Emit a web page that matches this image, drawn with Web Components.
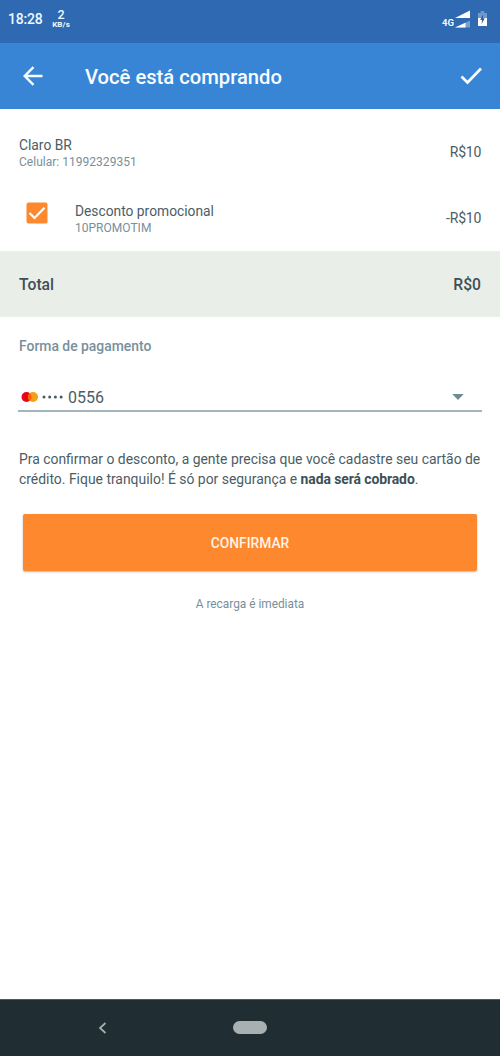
<!DOCTYPE html>
<html lang="pt-BR">
<head>
<meta charset="utf-8">
<title>Você está comprando</title>
<style>
html,body{margin:0;height:100%;background:#fff}
body{font-family:Roboto,"Liberation Sans",sans-serif;color:#4b5d65}
</style>
</head>
<body>
<checkout-screen></checkout-screen>
<script>
function define(name, html) {
  const t = document.createElement('template');
  t.innerHTML = html;
  customElements.define(name, class extends HTMLElement {
    constructor() {
      super();
      this.attachShadow({mode: 'open'}).append(t.content.cloneNode(true));
    }
  });
}

define('status-bar', `
<style>
:host{display:flex;align-items:center;height:43px;box-sizing:border-box;padding:0 13px 6px 8px;background:#2f69b1;color:#eef9ff;font-weight:500}
.time{font-size:14px;line-height:16px;letter-spacing:-.2px;margin-top:1px}
.rate{display:flex;flex-direction:column;align-items:center;margin-left:9px;font-size:12.5px;line-height:13px;width:19px}
.rate small{font-size:8px;line-height:8px;font-weight:700;letter-spacing:.1px}
.net{margin-left:auto;font-size:9.5px;line-height:10px;font-weight:700;margin-top:9px}
svg{display:block}
.sig{margin:0 7px 0 0}
</style>
<span class="time">18:28</span>
<span class="rate"><span>2</span><small>KB/s</small></span>
<span class="net">4G</span>
<svg class="sig" width="17" height="18" viewBox="0 0 17 18"><path d="M1 8L16 .500V8Z" fill="#fff"/><path d="M1 17.500L16 10.500V17.500Z" fill="#7aa0d0"/><path d="M1 17.500L11.500 12.700V17.500Z" fill="#fff"/></svg>
<svg width="9" height="17" viewBox="0 0 10 17" preserveAspectRatio="none"><path d="M3 1H7V3H10V8H0V3H3Z" fill="#7399cc"/><path d="M0 8H10V16H0Z" fill="#fff"/><path d="M5.800 4L2.500 10H4.600L4 14L7.500 8.300H5.300Z" fill="#2f5995"/></svg>
`);

define('app-bar', `
<style>
:host{display:flex;align-items:center;height:66px;box-sizing:border-box;padding:0 16px 0 21px;background:#3985d5;color:#f8fdff}
svg{display:block;fill:none;stroke:#f5fcff;stroke-width:2.400}
.title{margin:1px auto 0 40px;font-size:20.2px;line-height:24px;font-weight:500}
</style>
<svg width="24" height="24" viewBox="0 0 24 24"><path d="M21.500 12H4M12.500 3.200L3.700 12L12.500 20.800"/></svg>
<span class="title"><slot></slot></span>
<svg width="26" height="24" viewBox="0 0 26 24"><path d="M3.500 12.500L9.500 18.500L23 4.500" stroke-width="2.700"/></svg>
`);

define('line-item', `
<style>
:host{display:flex;align-items:center;height:66px;box-sizing:border-box;padding:0 19px}
.text{flex:1;display:flex;flex-direction:column;margin-top:3px}
.name{font-size:13.8px;line-height:17px}
.sub{font-size:12px;line-height:17px;color:#78909c;letter-spacing:.02px}
.price{font-size:14px;line-height:17px;letter-spacing:-.2px;margin-right:-.2px}
</style>
<slot name="lead"></slot>
<span class="text"><span class="name"><slot></slot></span><span class="sub"><slot name="sub"></slot></span></span>
<span class="price"><slot name="price"></slot></span>
`);

define('check-box', `
<style>
:host{display:block;width:22px;height:22px;margin:-10px 27px 0 7px}
svg{display:block}
</style>
<svg width="22" height="22" viewBox="0 0 22 22"><rect x=".500" y=".500" width="21" height="21" rx="2" fill="#fd882e"/><path d="M3.500 11L8.500 16L18.500 5.800" fill="none" stroke="#fff" stroke-width="2.200"/></svg>
`);

define('total-row', `
<style>
:host{display:flex;align-items:center;justify-content:space-between;height:66px;box-sizing:border-box;padding:2px 19px 0;background:#e9efe8;color:#3d4f57;font-size:15.7px;line-height:20px;font-weight:500}
</style>
<slot></slot><slot name="price"></slot>
`);

define('payment-select', `
<style>
:host{display:block;margin:20px 18px 0}
.label{margin-left:1px;font-size:13.9px;line-height:18px;font-weight:500;color:#78909c}
.field{display:flex;align-items:center;height:27px;margin-top:28px;border-bottom:2px solid #a3b4bc;padding:0 18px 0 3px;font-size:16px;color:#4b5d65}
svg{display:block}
.dots{margin-left:3px}
.num{margin-left:4px;flex:1;padding-top:1px}
</style>
<div class="label"><slot></slot></div>
<div class="field">
<svg width="18" height="12" viewBox="0 0 18 12"><circle cx="5.500" cy="6" r="5" fill="#e8051b"/><circle cx="12" cy="6" r="5" fill="#f79e1b"/><path d="M8.750 2.200A5 5 0 0 1 8.750 9.800A5 5 0 0 1 8.750 2.200" fill="#ff5f00"/></svg>
<svg class="dots" width="22" height="4" viewBox="0 0 22 4" fill="#455a64"><circle cx="2" cy="2" r="1.500"/><circle cx="7.700" cy="2" r="1.500"/><circle cx="13.400" cy="2" r="1.500"/><circle cx="19.100" cy="2" r="1.500"/></svg>
<span class="num"><slot name="value"></slot></span>
<svg width="12" height="6" viewBox="0 0 12 6"><path d="M.300 0H11.700L6 6Z" fill="#708d96"/></svg>
</div>
`);

define('confirm-button', `
<style>
:host{display:flex;align-items:center;justify-content:center;height:57px;margin:25px 23px 0;border-radius:2px;background:#fd882e;color:#fff4e6;box-shadow:0 1px 2px rgba(0,0,0,.3);font-size:13.8px;line-height:18px;font-weight:500}
</style>
<span><slot></slot></span>
`);

define('nav-bar', `
<style>
:host{display:grid;grid-template-columns:1fr auto 1fr;align-items:center;height:57px;background:#202e33;border-top:1px solid #4b5b61;box-sizing:border-box}
.back{display:block;margin-left:98px}
.home{width:34px;height:13px;border-radius:7px;background:#a9b0b2;margin-top:-1px}
</style>
<svg class="back" width="9" height="12" viewBox="0 0 9 12"><path d="M7.500 1L2 6L7.500 11" fill="none" stroke="#a9b0b2" stroke-width="1.700"/></svg>
<span class="home"></span>
`);

define('checkout-screen', `
<style>
:host{display:flex;flex-direction:column;height:1056px;width:500px;background:#fff;overflow:hidden}
.list{padding-top:10px}
p{margin:0}
.info{margin:37px 0 0 19px;font-size:13.91px;line-height:20px;white-space:nowrap}
b{font-weight:700;color:#3d4f57;letter-spacing:-.07px}
.note{margin-top:25px;text-align:center;font-size:11.85px;line-height:17px;color:#78909c}
nav-bar{margin-top:auto}
</style>
<status-bar></status-bar>
<app-bar>Você está comprando</app-bar>
<div class="list">
<line-item>Claro BR<span slot="sub">Celular: 11992329351</span><span slot="price">R$10</span></line-item>
<line-item><check-box slot="lead"></check-box>Desconto promocional<span slot="sub">10PROMOTIM</span><span slot="price">-R$10</span></line-item>
<total-row><span>Total</span><span slot="price">R$0</span></total-row>
</div>
<payment-select>Forma de pagamento<span slot="value">0556</span></payment-select>
<p class="info">Pra confirmar o desconto, a gente precisa que você cadastre seu cartão de<br>crédito. Fique tranquilo! É só por segurança e <b>nada será cobrado</b>.</p>
<confirm-button>CONFIRMAR</confirm-button>
<p class="note">A recarga é imediata</p>
<nav-bar></nav-bar>
`);
</script>
</body>
</html>
